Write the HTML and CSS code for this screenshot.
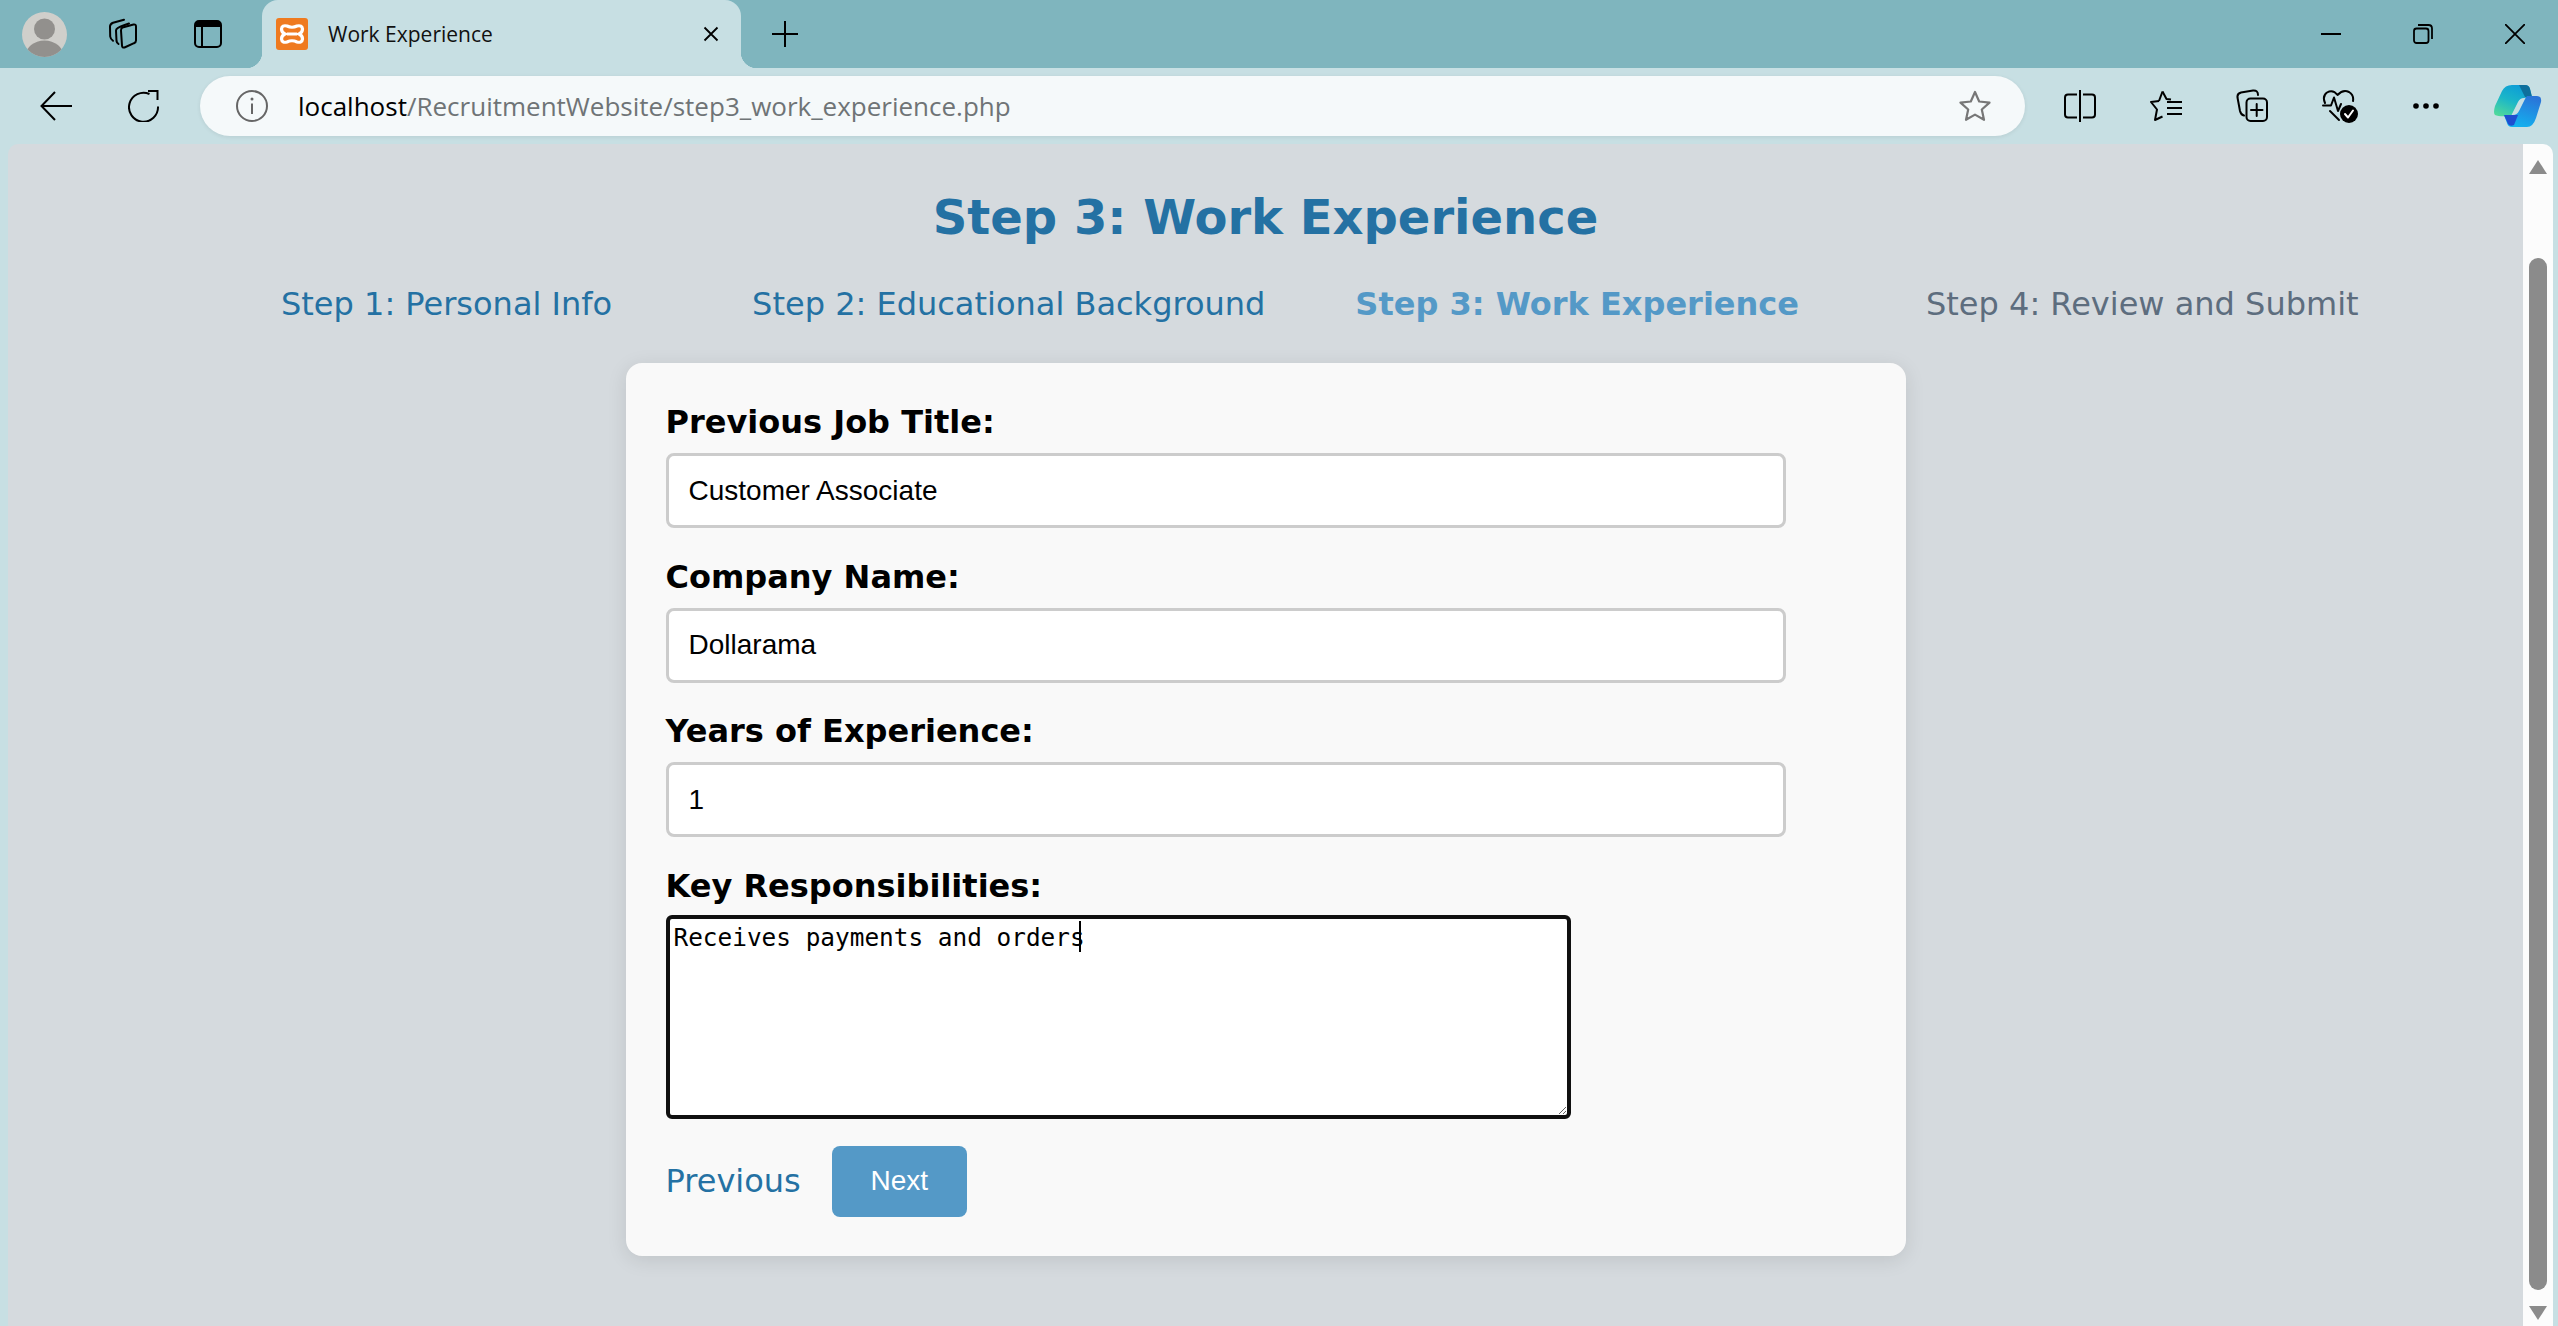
FILE: index.html
```html
<!DOCTYPE html>
<html lang="en">
<head>
	<meta charset="UTF-8">
	<title>Work Experience</title>
	<link rel="stylesheet" href="styles.css">
</head>
<body>
	<div class="tabstrip">
		<svg class="avatar" width="45" height="45" viewBox="0 0 45 45"><defs><clipPath id="avatarclip"><circle cx="22.5" cy="22.5" r="22.5"/></clipPath></defs><circle cx="22.5" cy="22.5" r="22.5" fill="#d0cfcb"/><g clip-path="url(#avatarclip)" fill="#92908d"><circle cx="22.5" cy="17" r="10.5"/><ellipse cx="22.5" cy="44" rx="19" ry="15.5"/></g></svg>
		<svg class="ico-tabs" width="32" height="32" viewBox="0 0 32 32" fill="none" stroke="#000" stroke-width="2" stroke-linecap="round" stroke-linejoin="round"><path d="M14.500 9.500 L25.500 6.500 Q28 6 28 8.500 L28 22.500 Q28 24.500 26 25.200 L16.500 29.500 Q14 30 14 27.500 L13 12.500 Q13 10 14.500 9.500Z"/><path d="M21 5.500 L16 7.300 Q8 10 8 12.500 L8.500 23 Q8.800 25 10.500 26"/><path d="M16 1.800 L5 4.800 Q2 6 2 8.500 L2.200 18.500 Q2.500 21 5 22.800"/></svg>
		<svg class="ico-vtabs" width="28" height="28" viewBox="0 0 28 28"><rect x="1" y="1" width="26" height="26" rx="4" fill="none" stroke="#000" stroke-width="2"/><path d="M1 5 Q1 1 5 1 L23 1 Q27 1 27 5 L27 7 L1 7Z" fill="#000"/><path d="M8 7 L8 27" stroke="#000" stroke-width="2"/></svg>
		<div class="tab">
			<svg class="favicon" width="32" height="32" viewBox="0 0 32 32"><rect width="32" height="32" rx="3" fill="#ef7a1f"/><path d="M11 8 Q16 10.500 21 8 Q26 6.800 26.500 11 Q26.500 14.500 23 16 Q26.500 17.500 26.500 21 Q26 25.200 21 24 Q16 21.500 11 24 Q6 25.200 5.500 21 Q5.500 17.500 9 16 Q5.500 14.500 5.500 11 Q6 6.800 11 8Z" fill="none" stroke="#fff" stroke-width="3.200"/><path d="M11 16 L21 16" stroke="#fff" stroke-width="3"/></svg>
			<span class="tab-title">Work Experience</span>
			<svg class="tab-close" width="16" height="16" viewBox="0 0 16 16" stroke="#000" stroke-width="1.800"><path d="M1.500 1.500 L14.500 14.500 M14.500 1.500 L1.500 14.500"/></svg>
		</div>
		<svg class="ico-new" width="28" height="28" viewBox="0 0 28 28" stroke="#000" stroke-width="2"><path d="M14 1 L14 27 M1 14 L27 14"/></svg>
		<div class="window-btns">
			<svg width="20" height="20" viewBox="0 0 20 20" stroke="#000" stroke-width="2"><path d="M0 10 L20 10"/></svg>
			<svg width="20" height="20" viewBox="0 0 20 20" fill="none" stroke="#000" stroke-width="1.800"><rect x="1" y="4.500" width="14.500" height="14.500" rx="2.500"/><path d="M5 1 L15.500 1 Q19 1 19 4.500 L19 15"/></svg>
			<svg width="20" height="20" viewBox="0 0 20 20" stroke="#000" stroke-width="1.800"><path d="M0 0 L20 20 M20 0 L0 20"/></svg>
		</div>
	</div>

	<div class="toolbar">
		<svg class="ico-back" width="32" height="30" viewBox="0 0 32 30" fill="none" stroke="#000" stroke-width="2"><path d="M32 15 L1.500 15 M15 1 L1.500 15 L15 29"/></svg>
		<svg class="ico-reload" width="32" height="32" viewBox="0 0 32 32" fill="none" stroke="#000" stroke-width="2"><path d="M21.500 4 A14.500 14.500 0 1 0 30 16.500"/><path d="M20 1 L29.500 1 L29.500 10"/><path d="M29 1.500 L20 9.500" stroke="none"/></svg>
		<div class="addressbar">
			<svg class="ico-info" width="32" height="32" viewBox="0 0 32 32" fill="none" stroke="#666" stroke-width="2"><circle cx="16" cy="16" r="15"/><path d="M16 13.500 L16 24"/><circle cx="16" cy="9" r="1.500" fill="#666" stroke="none"/></svg>
			<span class="url"><span class="url-host">localhost</span>/RecruitmentWebsite/step3_work_experience.php</span>
			<svg class="ico-star" width="32" height="32" viewBox="0 0 32 32" fill="none" stroke="#777" stroke-width="2.200" stroke-linejoin="round"><path d="M16 2 L20.200 11.500 L30.500 12.600 L22.800 19.500 L25 29.800 L16 24.600 L7 29.800 L9.200 19.500 L1.500 12.600 L11.800 11.500Z"/></svg>
		</div>
		<div class="toolbar-btns">
			<svg width="32" height="32" viewBox="0 0 32 32" fill="none" stroke="#000" stroke-width="2"><path d="M13 4.500 L4 4.500 Q1 4.500 1 7.500 L1 24.500 Q1 27.500 4 27.500 L13 27.500 M19 4.500 L28 4.500 Q31 4.500 31 7.500 L31 24.500 Q31 27.500 28 27.500 L19 27.500 M16 0 L16 32"/></svg>
			<svg width="32" height="32" viewBox="0 0 32 32" fill="none" stroke="#000" stroke-width="2" stroke-linejoin="round"><path d="M12.500 1.500 L16.500 9 L21 9.500 M9 11 L1 12 L7 19.500 L5 30 L12.500 26.500"/><path d="M12.500 1.500 L9 11"/><path d="M17 12 L32 12 M17 18 L32 18 M17 24 L32 24"/></svg>
			<svg width="32" height="34" viewBox="0 0 32 34" fill="none" stroke="#000" stroke-width="2" stroke-linecap="round"><path d="M22 6 Q22 1 17 1.500 L5 3.500 Q1 4.500 1.500 8.500 L4 22 Q5 26 8 26.500"/><rect x="10.500" y="9.500" width="20.500" height="22.500" rx="4"/><path d="M20.700 15 L20.700 27 M15 21 L26.500 21"/></svg>
			<svg width="36" height="34" viewBox="0 0 36 34" fill="none" stroke="#000" stroke-width="2" stroke-linecap="round" stroke-linejoin="round"><path d="M3 14 Q0 7 5 3.500 Q11 0 15.500 6 Q21 0 27 3 Q32 6 31 12"/><path d="M1 16.500 L9 16.500 L12 8.500 L16 22 L19 15"/><path d="M8 22 L17 31"/><circle cx="27" cy="25" r="9" fill="#000" stroke="none"/><path d="M23 25 L26 28.500 L31 21.500" stroke="#fff"/></svg>
			<svg width="28" height="8" viewBox="0 0 28 8" fill="#000"><circle cx="4" cy="4" r="2.800"/><circle cx="14" cy="4" r="2.800"/><circle cx="24" cy="4" r="2.800"/></svg>
			<svg width="48" height="42" viewBox="0 0 48 42"><defs><linearGradient id="cpleft" x1="0.700" y1="0" x2="0.200" y2="1"><stop offset="0" stop-color="#0c9bd8"/><stop offset="0.500" stop-color="#1bb6c8"/><stop offset="1" stop-color="#4fd89c"/></linearGradient><linearGradient id="cpright" x1="0.700" y1="0" x2="0.300" y2="1"><stop offset="0" stop-color="#2a74d8"/><stop offset="1" stop-color="#12b4f0"/></linearGradient></defs><path d="M18 0 L31 0 Q35 0 36 4 L38 12 L30 13 Q26 13 24 17 L17 31 Q5 32 1 30 Q-1 28 1 21 L8 6 Q11 0 18 0Z" fill="url(#cpleft)"/><path d="M25 0 L31 0 Q35 0 36 4 L38 12 L31 12Z" fill="#0e6f9c"/><path d="M33 11 L43 11 Q48 11 47 17 L42 33 Q39 42 33 42 L18 42 Q14 42 13 38 L10 30 L19 30 Q23 30 25 26 L31 14 Q32 12 33 11Z" fill="url(#cpright)"/><path d="M10 30 L24 30 L20 40 Q16 42 14 39Z" fill="#1f4fd0"/></svg>
		</div>
	</div>

	<div class="viewport">
		<div class="page">
			<h1 class="page-title">Step 3: Work Experience</h1>
			<div class="steps">
				<a class="step step-one" href="javascript:;">Step 1: Personal Info</a>
				<a class="step step-two" href="javascript:;">Step 2: Educational Background</a>
				<a class="step step-three active" href="javascript:;">Step 3: Work Experience</a>
				<span class="step step-four">Step 4: Review and Submit</span>
			</div>
			<form class="card">
				<label class="field-label" for="jobtitle">Previous Job Title:</label>
				<input class="field" id="jobtitle" type="text" value="Customer Associate">
				<label class="field-label" for="company">Company Name:</label>
				<input class="field" id="company" type="text" value="Dollarama">
				<label class="field-label" for="years">Years of Experience:</label>
				<input class="field" id="years" type="text" value="1">
				<label class="field-label label-area" for="duties">Key Responsibilities:</label>
				<div class="area-wrap">
					<textarea class="area" id="duties">Receives payments and orders</textarea>
					<span class="caret"></span>
				</div>
				<div class="actions">
					<a class="prev" href="javascript:;">Previous</a>
					<button class="next" type="button">Next</button>
				</div>
			</form>
		</div>
		<div class="scrollbar">
			<span class="arrow-up"></span>
			<span class="thumb"></span>
			<span class="arrow-down"></span>
		</div>
	</div>
</body>
</html>
```

FILE: styles.css
```css
html,body{margin:0; padding:0; height:100%; overflow:hidden;}
body{width:2558px; height:1326px; background:#c7dfe3; display:flex; flex-direction:column;}
svg{display:block; flex:none;}

.tabstrip{height:68px; background:#7fb5be; display:flex; align-items:center; font-family:"Open Sans","Noto Sans",sans-serif;}
.avatar{margin-left:22px;}
.ico-tabs{margin-left:41px;}
.ico-vtabs{margin-left:54px;}
.tab{width:479px; height:68px; margin-left:40px; background:#c7dfe3; border-radius:16px 16px 0 0; display:flex; align-items:center; box-sizing:border-box; padding:0 22px 0 14px; position:relative;}
.tab:before,.tab:after{content:""; position:absolute; bottom:0; width:16px; height:16px;}
.tab:before{left:-16px; background:radial-gradient(circle at 0 0,transparent 16px,#c7dfe3 16.5px);}
.tab:after{right:-16px; background:radial-gradient(circle at 100% 0,transparent 16px,#c7dfe3 16.5px);}
.favicon{margin-right:20px;}
.tab-title{flex:1; font-size:21px; color:#111;}
.ico-new{margin-left:30px;}
.window-btns{margin-left:auto; margin-right:33px; display:flex; gap:72px; align-items:center;}

.toolbar{height:76px; display:flex; align-items:center; padding-bottom:0; box-sizing:border-box;}
.ico-back{margin-left:40px;}
.ico-reload{margin-left:56px;}
.addressbar{width:1825px; height:60px; margin-left:40px; border-radius:30px; background:#f5f9fa; display:flex; align-items:center; box-sizing:border-box; padding:0 34px 0 36px; box-shadow:0 1px 4px rgba(0,0,0,.08);}
.url{flex:1; margin-left:30px; font-family:"Open Sans","Noto Sans",sans-serif; font-size:26px; color:#6f7476; white-space:nowrap;}
.url-host{color:#000;}
.toolbar-btns{margin-left:39px; display:flex; align-items:center; gap:54px;}

.viewport{flex:1; display:flex; margin:0 5px 0 8px; min-height:0;}
.page{flex:1; background:#d5dade; border-radius:10px 0 0 0; font-family:"DejaVu Sans",Verdana,sans-serif; padding-top:45px;}
.page-title{margin:0; font-size:48px; line-height:56px; font-weight:bold; color:#2471a3; text-align:center;}
.steps{display:flex; margin-top:40px; padding-left:273px; font-size:32px; line-height:38px;}
.step{color:#2471a3; text-decoration:none; white-space:nowrap;}
.step-one{margin-right:140px;}
.step-two{margin-right:90px;}
.step-three{margin-right:127px;}
.step.active{color:#5499c7; font-weight:bold;}
.step-four{color:#5d6d7e;}

.card{width:1280px; height:893px; margin:40px auto 0; padding:40px; box-sizing:border-box; background:#f9f9f9; border-radius:16px; box-shadow:0 4px 20px rgba(0,0,0,.1);}
.field-label{display:block; font-size:32px; line-height:38px; font-weight:bold; color:#000; margin-bottom:12px;}
.label-area{margin-bottom:10px;}
.field{display:block; width:1120px; height:75px; box-sizing:border-box; margin:0 0 29.5px; padding:0 20px; border:3px solid #ccc; border-radius:8px; background:#fff; font-family:"Liberation Sans",Arial,sans-serif; font-size:28px; color:#000; outline:none;}

.area-wrap{width:905px; height:204px; position:relative;}
.area{display:block; width:905px; height:204px; box-sizing:border-box; margin:0; padding:4px; border:4px solid #101010; border-radius:6px; background:#fff; font-family:"DejaVu Sans Mono","Liberation Mono",monospace; font-size:24.4px; line-height:30px; color:#000; outline:none;}
.caret{position:absolute; left:413px; top:6px; width:2px; height:31px; background:#000;}

.actions{display:flex; align-items:center; gap:31px; margin-top:27px;}
.prev{font-size:32px; line-height:38px; color:#2471a3; text-decoration:none;}
.next{width:135px; height:71px; border:0; border-radius:8px; background:#5499c7; color:#fff; font-family:"Liberation Sans",Arial,sans-serif; font-size:28px; padding:0;}

.scrollbar{width:30px; background:#fcfcfc; border-radius:0 10px 0 0; display:flex; flex-direction:column; align-items:center; box-sizing:border-box; padding:16px 0 6px;}
.arrow-up{width:0; height:0; border-left:9px solid transparent; border-right:9px solid transparent; border-bottom:14px solid #8b8b8b;}
.arrow-down{width:0; height:0; border-left:9px solid transparent; border-right:9px solid transparent; border-top:14px solid #8b8b8b;}
.thumb{width:18px; flex:1; background:#8b8b8b; border-radius:9px; margin:84px 0 16px;}
```
